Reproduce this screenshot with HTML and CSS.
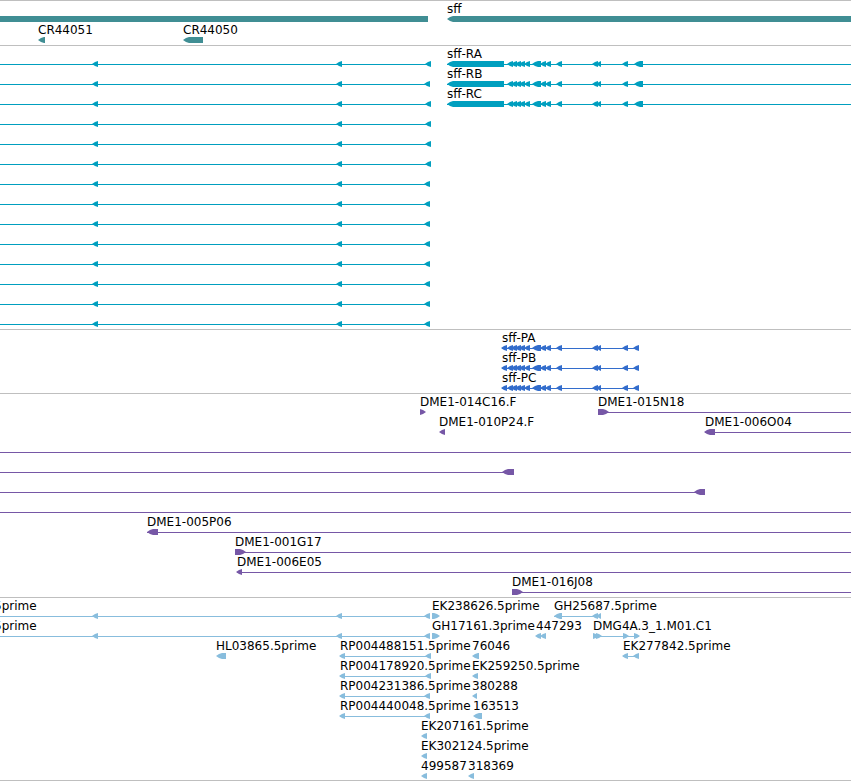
FILE: index.html
```
<!DOCTYPE html>
<html lang="en">
<head>
    <meta charset="UTF-8">
    <meta name="viewport" content="width=device-width, initial-scale=1.0">
    <title>sff region</title>
    <link rel="stylesheet" href="styles.css">
</head>
<body>
    <main class="browser">
        <section class="track genes" id="genes" aria-label="Genes"></section>
        <section class="track transcripts" id="transcripts" aria-label="Transcripts"></section>
        <section class="track proteins" id="proteins" aria-label="Proteins"></section>
        <section class="track clones" id="clones" aria-label="Clones"></section>
        <section class="track ests" id="ests" aria-label="ESTs"></section>
    </main>
    <script src="tracks.js"></script>
</body>
</html>
```
FILE: styles.css
```
* {
    margin: 0;
    padding: 0;
    box-sizing: border-box;
}
body {
    background-color: white;
    color: black;
    font-family: "DejaVu Sans", Verdana, sans-serif;
    font-size: 12px;
}
.browser {
    display: flex;
    flex-direction: column;
    border-bottom: 1px solid #bfbfbf;
}
.track {
    display: flex;
    flex-direction: column;
    border-top: 1px solid #bfbfbf;
    padding: 1px 0 2px;
}
.row {
    display: block;
    width: 100%;
    height: 20px;
    overflow: hidden;
    fill: currentColor;
}
.label {
    fill: black;
}
.genes {
    color: #408e94;
    padding-bottom: 1px;
}
.genes .row {
    height: 21px;
}
.transcripts {
    color: #009fbf;
}
.proteins {
    color: #336dcc;
}
.clones {
    color: #7657a6;
}
.ests {
    color: #88bddd;
    padding-bottom: 1px;
}
```
FILE: tracks.js
```
const SVG = "http://www.w3.org/2000/svg"
const EDGE = 4000 // feature runs on past the right side

// feature: [label, label x, direction, [[exon start, exon end], ...], [line start, line end]]
const mrna = [[507, 513], [511, 517], [515, 521], [519, 525], [524, 530], [532, 541], [540, 546], [545, 551], [556, 562], [592, 598], [596, 601], [622, 628]]

function longGene(end) {
    return ["", 0, "left", [[92, 98], [336, 342], [end - 6, end]], [0, end]]
}
function sffRna(name) {
    return [name, 447, "left", [[447, 504], ...mrna, [634, 643]], [447, EDGE]]
}
function sffProtein(name) {
    return [name, 502, "left", [[501, 507], ...mrna, [633, 639]], [502, 639]]
}
function single(name, dir, start, end) {
    return [name, start, dir, [[start, end]]]
}
function paired(name, end) {
    return [name, 340, "left", [[339, 345], [end - 6, end]], [340, end]]
}

const tracks = {
    genes: [
        [["", 0, "none", [[0, 428]]], single("sff", "left", 447, EDGE)],
        [single("CR44051", "left", 38, 45), single("CR44050", "left", 183, 203)]
    ],
    transcripts: [
        [longGene(431), sffRna("sff-RA")],
        [longGene(430), sffRna("sff-RB")],
        [longGene(431), sffRna("sff-RC")],
        ...[431, 431, 431, 430, 430, 430, 430, 430, 430, 430, 430].map(end => [longGene(end)])
    ],
    proteins: [
        [sffProtein("sff-PA")],
        [sffProtein("sff-PB")],
        [sffProtein("sff-PC")]
    ],
    clones: [
        [single("DME1-014C16.F", "right", 420, 426), ["DME1-015N18", 598, "right", [[598, 609]], [598, EDGE]]],
        [single("DME1-010P24.F", "left", 439, 445), ["DME1-006O04", 705, "left", [[704, 715]], [705, EDGE]]],
        [["", 0, "none", [], [0, EDGE]]],
        [["", 0, "left", [[502, 514]], [0, 514]]],
        [["", 0, "left", [[694, 705]], [0, 705]]],
        [["", 0, "none", [], [0, EDGE]]],
        [["DME1-005P06", 147, "left", [[147, 158]], [147, EDGE]]],
        [["DME1-001G17", 235, "right", [[235, 246]], [235, EDGE]]],
        [["DME1-006E05", 237, "left", [[236, 242]], [237, EDGE]]],
        [["DME1-016J08", 512, "right", [[512, 523]], [512, EDGE]]]
    ],
    ests: [
        [
            ["5prime", -6, "left", [[92, 98], [336, 342], [424, 430]], [0, 430]],
            single("EK238626.5prime", "right", 432, 440),
            ["GH25687.5prime", 554, "left", [[554, 562], [592, 598], [596, 601]], [554, 601]]
        ],
        [
            ["5prime", -6, "left", [[92, 98], [336, 342], [424, 430]], [0, 430]],
            single("GH17161.3prime", "right", 432, 440),
            ["447293", 536, "left", [[535, 541], [540, 546]]],
            ["DMG4A.3_1.M01.C1", 593, "right", [[593, 599], [596, 602], [623, 629], [634, 640]], [593, 639]]
        ],
        [
            single("HL03865.5prime", "left", 216, 226),
            paired("RP004488151.5prime", 431),
            single("76046", "left", 472, 479),
            ["EK277842.5prime", 623, "left", [[622, 628], [633, 639]], [623, 639]]
        ],
        [paired("RP004178920.5prime", 431), single("EK259250.5prime", "left", 472, 478)],
        [paired("RP004231386.5prime", 430), single("380288", "left", 472, 477)],
        [paired("RP004440048.5prime", 430), single("163513", "left", 473, 482)],
        [single("EK207161.5prime", "left", 421, 427)],
        [single("EK302124.5prime", "left", 421, 427)],
        [single("499587", "left", 421, 427), single("318369", "left", 468, 474)]
    ]
}

function add(row, tag, attrs) {
    const el = document.createElementNS(SVG, tag)
    for (const key in attrs) {
        el.setAttribute(key, attrs[key])
    }
    row.appendChild(el)
    return el
}

function exonPoints(dir, s, e) {
    const tip = Math.min(6, e - s)
    if (dir === "left") {
        return `${s},17 ${s + 3},15 ${s + tip},14 ${e},14 ${e},20 ${s + tip},20 ${s + 3},19`
    }
    if (dir === "right") {
        return `${s},14 ${e - tip},14 ${e - 3},15 ${e},17 ${e - 3},19 ${e - tip},20 ${s},20`
    }
    return `${s},14 ${e},14 ${e},20 ${s},20`
}

for (const id in tracks) {
    const track = document.getElementById(id)
    for (const features of tracks[id]) {
        const row = document.createElementNS(SVG, "svg")
        row.setAttribute("class", "row")
        for (const [label, labelX, dir, exons, line] of features) {
            if (line) {
                add(row, "rect", { x: line[0], y: 17, width: line[1] - line[0], height: 1 })
            }
            for (const [start, end] of exons) {
                add(row, "polygon", { points: exonPoints(dir, start, end) })
            }
            if (label) {
                add(row, "text", { class: "label", x: labelX, y: 11 }).textContent = label
            }
        }
        track.appendChild(row)
    }
}
```
